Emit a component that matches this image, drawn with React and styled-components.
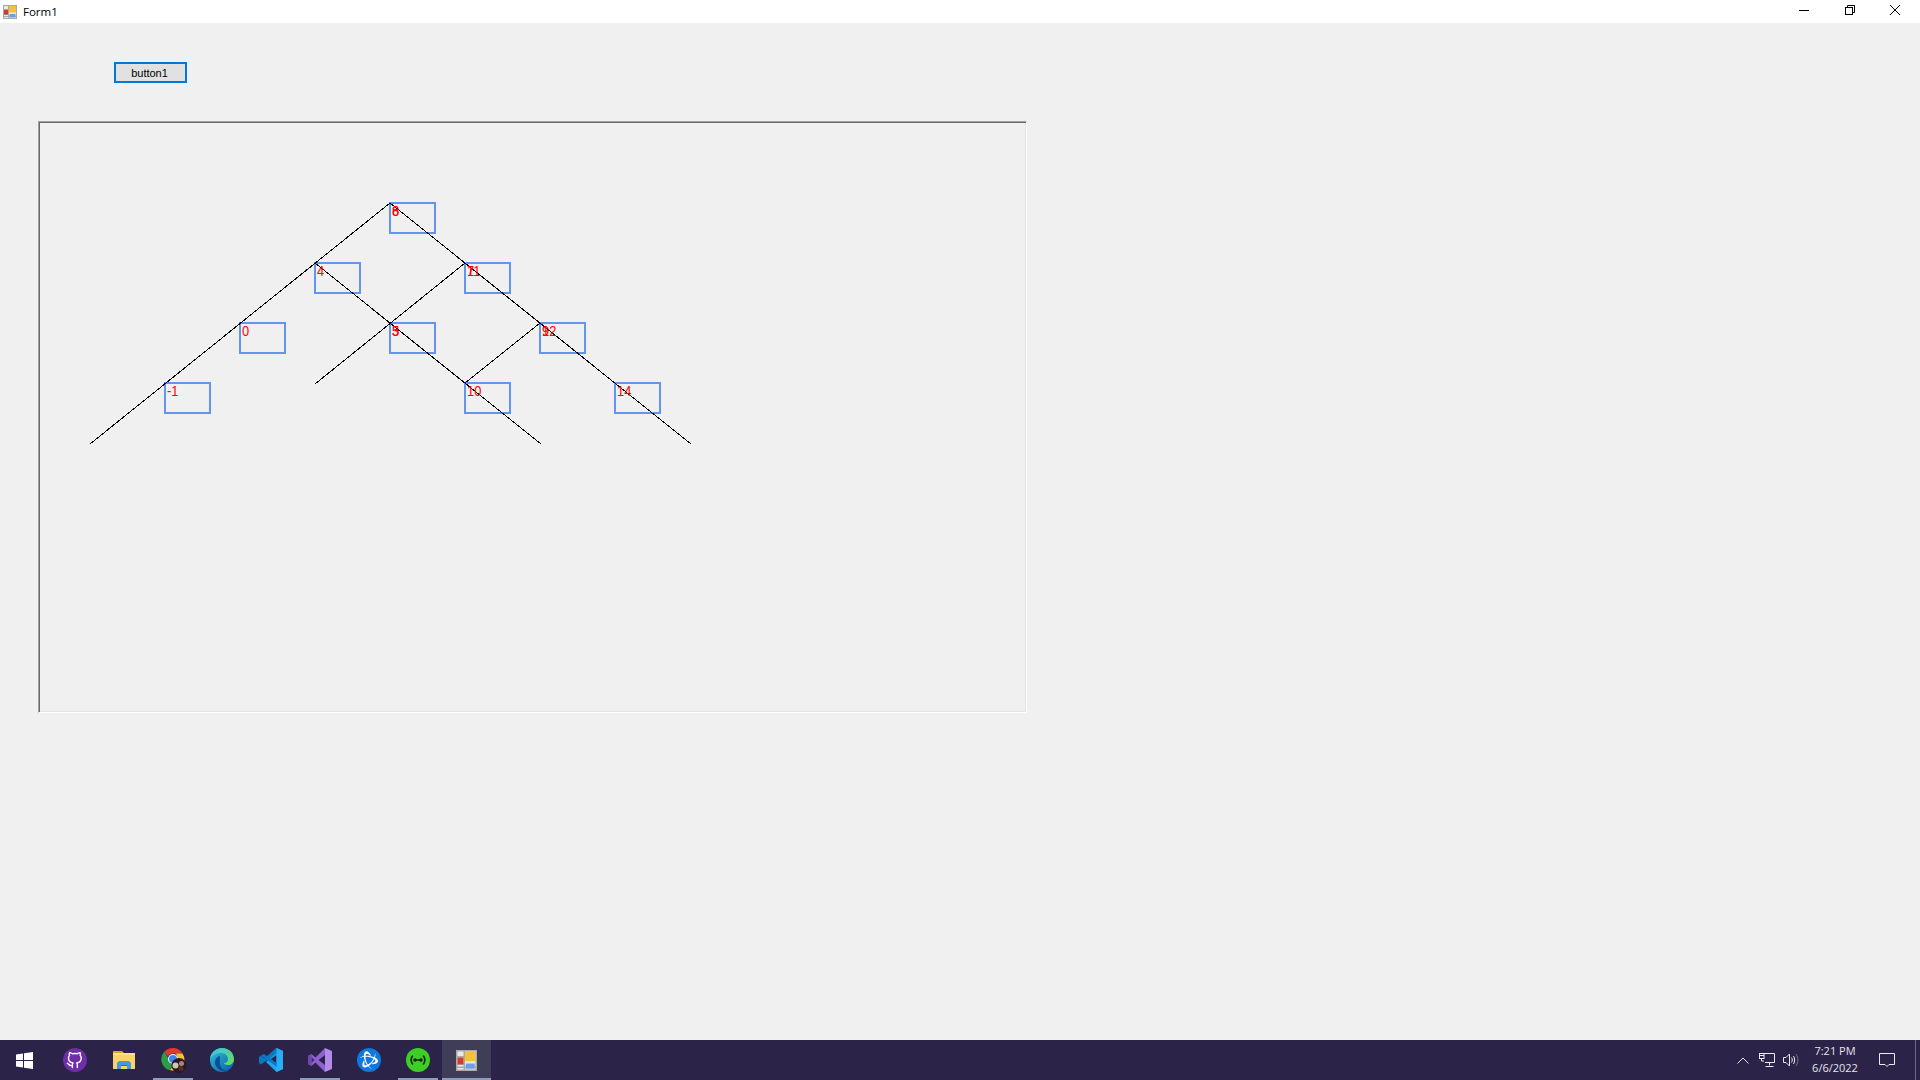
import React from "react";
import styled, { createGlobalStyle } from "styled-components";
import { FiGithub } from "react-icons/fi";
import { SiBattledotnet } from "react-icons/si";

const Global = createGlobalStyle`
  html, body { margin: 0; padding: 0; height: 100%; overflow: hidden; }
  #root { height: 100%; }
`;

const Screen = styled.div`
  width: 1920px; height: 1080px; display: flex; flex-direction: column;
  background: #f0f0f0;
`;
const TitleBar = styled.header`
  height: 23px; background: #fff; display: flex; align-items: center; flex: none;
`;
const AppTitle = styled.span`
  font: 11.5px "Open Sans", sans-serif; color: #000; margin-left: 6px;
`;
const TitleIcon = styled.span`
  display: flex; margin: 0 0 0 3px;
`;
const WindowControls = styled.div`
  margin-left: auto; margin-right: 2px; display: flex; height: 100%;
`;
const WindowButton = styled.span`
  width: 45.5px; height: 20px; display: flex; align-items: center; justify-content: center;
`;
const Client = styled.main`
  flex: 1; display: flex; flex-direction: column; align-items: flex-start;
  padding: 39px 0 0 38px;
`;
const PushButton = styled.button`
  box-sizing: border-box; width: 73px; height: 21px; margin-left: 76px; padding: 0 2px 0 0;
  border: 2px solid #0078d7; background: #e1e1e1; color: #000;
  font: 11px "Liberation Sans", Arial, sans-serif;
`;
const Canvas = styled.section`
  position: relative; box-sizing: border-box; width: 989px; height: 592px; margin-top: 38px;
  border-style: solid; border-width: 1px;
  border-color: #a0a0a0 #fff #fff #a0a0a0;
  box-shadow: inset 1px 1px 0 #696969, inset -1px -1px 0 #e3e3e3;
`;
const Wires = styled.svg`
  position: absolute; left: 0; top: 0; width: 987px; height: 590px; z-index: 2; pointer-events: none;
`;
const TreeNode = styled.div`
  position: absolute; box-sizing: border-box; width: 47px; height: 32px;
  left: ${(p) => p.$x - 39}px; top: ${(p) => p.$y - 122}px;
  border: 2px solid #6495ed;
`;
const NodeText = styled.span`
  position: absolute; left: 1px; top: -1px; z-index: 3;
  font: 14px/16px "Liberation Sans", Arial, sans-serif; color: #ff0000;
  white-space: nowrap; transform: scaleX(0.92); transform-origin: left center;
`;
const Taskbar = styled.footer`
  height: 40px; flex: none; background: #2c2349; display: flex; align-items: stretch;
`;
const StartButton = styled.span`
  width: 50px; padding-right: 2px; box-sizing: border-box; display: flex; align-items: center; justify-content: center;
`;
const TaskItem = styled.span`
  position: relative; width: 49px; display: flex; align-items: center; justify-content: center;
  background: ${(p) => (p.$active ? "#403d58" : "transparent")};
  &::after {
    content: ""; position: absolute; bottom: 0; height: 2px; background: #8f9db8;
    left: ${(p) => (p.$active ? "0" : "5px")}; right: ${(p) => (p.$active ? "0" : "4px")};
    display: ${(p) => (p.$running ? "block" : "none")};
  }
`;
const ChromeSlot = styled.span`
  display: flex; margin-left: 2px;
`;
const Round = styled.span`
  width: 24px; height: 24px; border-radius: 50%; display: flex; align-items: center; justify-content: center;
  background: ${(p) => p.$bg}; color: #fff;
`;
const Tray = styled.div`
  margin-left: auto; display: flex; align-items: stretch;
`;
const TrayIcon = styled.span`
  width: 24px; display: flex; align-items: center; justify-content: center;
`;
const Clock = styled.time`
  width: 48px; margin-left: 8px; padding-bottom: 2px; box-sizing: border-box;
  display: flex; flex-direction: column; align-items: center; justify-content: center;
  font: 11px/17px "Open Sans", sans-serif; color: #e6e4ec; white-space: nowrap;
`;
const Notify = styled.span`
  width: 56px; display: flex; align-items: center; justify-content: center;
`;
const ShowDesktop = styled.span`
  width: 5px; box-sizing: border-box; border-left: 1px solid #6d6985;
`;

const nodes = [
  { x: 389, y: 202, t: "8", g: "6" },
  { x: 314, y: 262, t: "4" },
  { x: 464, y: 262, t: "11", g: "7" },
  { x: 239, y: 322, t: "0" },
  { x: 389, y: 322, t: "5", g: "3" },
  { x: 539, y: 322, t: "12", g: "9" },
  { x: 164, y: 382, t: "-1" },
  { x: 464, y: 382, t: "10" },
  { x: 614, y: 382, t: "14" },
];
const segs = [
  [390, 203, 90, 444],
  [390, 203, 691, 444],
  [315, 263, 541, 444],
  [465, 263, 315, 384],
  [540, 323, 465, 383],
];

const FormIcon = ({ s = 14 }) => (
  <svg width={s} height={s} viewBox="0 0 14 14">
    <rect x="0.5" y="0.5" width="13" height="13" fill="#e8e8e8" stroke="#a9a9a9" />
    <path d="M0 4.5h6M0 9.5h6M5.5 0v14M0 11.5h14" stroke="#a9a9a9" fill="none" />
    <rect x="1" y="5" width="4" height="4.5" fill="#d33a2c" />
    <rect x="6" y="1" width="7" height="6.5" fill="#f5c13c" />
    <rect x="6.5" y="9" width="6" height="3.5" fill="#6c9fe8" />
  </svg>
);
const WinLogo = () => (
  <svg width="17" height="17" viewBox="0 0 17 17" fill="#fff">
    <path d="M0 2.4 7 1.4V8H0ZM8 1.3 17 0V8H8ZM0 9H7V15.6L0 14.6ZM8 9H17V17L8 15.7Z" />
  </svg>
);
const Explorer = () => (
  <svg width="22" height="20" viewBox="0 0 22 20">
    <path d="M0 1h9l2 2H0Z" fill="#e0a526" />
    <rect x="0" y="3" width="22" height="16" fill="#f8d366" />
    <rect x="0" y="3" width="22" height="2" fill="#fbe08c" />
    <path d="M4 19v-6l2-2h10l2 2v6h-4v-4H8v4Z" fill="#3f9be0" />
    <rect x="8" y="15" width="6" height="1" fill="#1f6fb5" />
  </svg>
);
const Chrome = () => (
  <svg width="26" height="26" viewBox="0 0 26 26">
    <path d="M12 1a11 11 0 0 1 9.5 5.5H12a5.5 5.5 0 0 0-5 3L3.5 4.5A11 11 0 0 1 12 1Z" fill="#e0392d" />
    <path d="M3.5 4.5 8 12.5a5 5 0 0 0 4 4.5l-3 6A11 11 0 0 1 3.5 4.5Z" fill="#2d9c48" />
    <path d="M21.5 6.5A11 11 0 0 1 9 23l5-6.5a5 5 0 0 0 2-4.5 5 5 0 0 0-1.500-5.500Z" fill="#f8c42e" />
    <circle cx="12" cy="12" r="5" fill="#fff" />
    <circle cx="12" cy="12" r="4" fill="#3f86ea" />
    <circle cx="18" cy="18.500" r="7.500" fill="#2b1a1e" />
    <circle cx="14.500" cy="18.500" r="3" fill="#cfc3bb" />
    <circle cx="20.500" cy="16.500" r="2.500" fill="#a7877a" />
    <circle cx="20" cy="21.500" r="2.500" fill="#5c2a2a" />
  </svg>
);
const Edge = () => (
  <svg width="24" height="24" viewBox="0 0 24 24">
    <defs>
      <linearGradient id="edgeA" x1="0" y1="0" x2="1" y2="1">
        <stop offset="0" stopColor="#2fc3dc" />
        <stop offset="1" stopColor="#0c59a4" />
      </linearGradient>
      <linearGradient id="edgeB" x1="0" y1="0" x2="1" y2="1">
        <stop offset="0" stopColor="#35c1f1" />
        <stop offset="1" stopColor="#6be04d" />
      </linearGradient>
    </defs>
    <circle cx="12" cy="12" r="12" fill="url(#edgeA)" />
    <path d="M12 0C19 0 24 5 24 11.500 24 15 21 17 18 17c-2 0-4-1-4-2 3 0 4-2 4-4 0-4-4-6-7-6C6 5 2 8 0 11 .5 5 5.500 0 12 0Z" fill="url(#edgeB)" />
    <path d="M10 8c-4 1-6 5-4.500 9 1.500 4 6 7 11 6-3-1-6-3-6.500-7-.3-3 0-6 0-8Z" fill="#0b4f95" />
  </svg>
);
const VSCode = () => (
  <svg width="24" height="24" viewBox="0 0 24 24">
    <path d="M17.500 0 24 3v18l-6.500 3L7 14l2.500-2.500L17.500 17V7L9.500 12.500 7 10Z" fill="#1ea4ef" />
    <path d="M17.500 0 24 3v18l-6.500 3Z" fill="#27aef5" />
    <path d="M2 7.500 0 9v6l2 1.500 5-4.500ZM2 7.500l15.500 11v-3.500L5 6ZM2 16.500 17.500 5.500V0L5 10.500" fill="#0a78c2" />
  </svg>
);
const VisualStudio = () => (
  <svg width="24" height="24" viewBox="0 0 24 24">
    <path d="M17 0 24 3v18l-7 3Z" fill="#b28be8" />
    <path d="M17 0v7L10.500 12 17 17v7L7.500 14.500 3.500 18 0 16V8l3.500-2L7.500 9.500Z" fill="#8d5fd0" />
    <path d="M3.500 9v6l3-3Z" fill="#3b2a63" />
    <path d="M0 8l3.500-2v3L3.500 15v3L0 16Z" fill="#6d47ad" />
  </svg>
);
const Broadcast = () => (
  <svg width="16" height="10" viewBox="0 0 16 10" fill="none" stroke="#10240d" strokeWidth="1.500" strokeLinecap="round">
    <path d="M2.500 1C.8 3.500.8 6.500 2.500 9M13.500 1c1.700 2.500 1.700 5.500 0 8M5 5h6" />
    <circle cx="5" cy="5" r="1" fill="#10240d" />
    <circle cx="11" cy="5" r="1" fill="#10240d" />
  </svg>
);
const Chevron = () => (
  <svg width="12" height="7" viewBox="0 0 12 7" fill="none" stroke="#e6e4ec"><path d="M.5 6.500 6 1l5.500 5.500" /></svg>
);
const Network = () => (
  <svg width="16" height="14" viewBox="0 0 16 14" fill="none" stroke="#ece9f2">
    <path d="M4.500 .5H15.500V9.500H6M10.500 9.500V12.500M6.500 13.500H14.500" />
    <rect x=".5" y=".5" width="4.500" height="5" />
    <path d="M.5 2.500h4.500M2.500 5.500V8H5" />
  </svg>
);
const Speaker = () => (
  <svg width="16" height="14" viewBox="0 0 16 14" fill="none" stroke="#ece9f2">
    <path d="M.5 4.500H3L6.500 1V13L3 9.500H.5Z" />
    <path d="M8.500 4.500c1 1.500 1 3.500 0 5M10.500 3c1.500 2.500 1.500 5.500 0 8" />
    <path d="M13 1c2.500 3.500 2.500 8.500 0 12" stroke="#77738a" />
  </svg>
);
const Bubble = () => (
  <svg width="16" height="15" viewBox="0 0 16 15" fill="none" stroke="#ece9f2">
    <path d="M.5 .5H15.500V11.500H10L8 13.500 6 11.500H.5Z" />
  </svg>
);

export default function App() {
  return (
    <Screen>
      <Global />
      <TitleBar>
        <TitleIcon><FormIcon /></TitleIcon>
        <AppTitle>Form1</AppTitle>
        <WindowControls>
          <WindowButton>
            <svg width="10" height="1" viewBox="0 0 10 1"><rect width="10" height="1" fill="#000" /></svg>
          </WindowButton>
          <WindowButton>
            <svg width="10" height="10" viewBox="0 0 10 10" fill="none" stroke="#000">
              <rect x=".5" y="2.500" width="7" height="7" />
              <path d="M2.500 2.500V.5H9.500V7.500H7.500" />
            </svg>
          </WindowButton>
          <WindowButton>
            <svg width="10" height="10" viewBox="0 0 10 10" fill="none" stroke="#000"><path d="M0 0 10 10M10 0 0 10" /></svg>
          </WindowButton>
        </WindowControls>
      </TitleBar>
      <Client>
        <PushButton>button1</PushButton>
        <Canvas>
          {nodes.map((n) => (
            <TreeNode key={n.t} $x={n.x} $y={n.y}>
              {n.g && <NodeText>{n.g}</NodeText>}
              <NodeText>{n.t}</NodeText>
            </TreeNode>
          ))}
          <Wires viewBox="39 122 987 590" shapeRendering="crispEdges">
            {segs.map(([a, b, c, d]) => (
              <line key={`${a}-${b}-${c}`} x1={a} y1={b} x2={c} y2={d} stroke="#000" strokeWidth="1" />
            ))}
          </Wires>
        </Canvas>
      </Client>
      <Taskbar>
        <StartButton><WinLogo /></StartButton>
        <TaskItem><Round $bg="#6f2da8"><FiGithub size={17} /></Round></TaskItem>
        <TaskItem><Explorer /></TaskItem>
        <TaskItem $running><ChromeSlot><Chrome /></ChromeSlot></TaskItem>
        <TaskItem><Edge /></TaskItem>
        <TaskItem><VSCode /></TaskItem>
        <TaskItem $running><VisualStudio /></TaskItem>
        <TaskItem><Round $bg="#0d78e0"><SiBattledotnet size={18} /></Round></TaskItem>
        <TaskItem $running><Round $bg="#3ecf24"><Broadcast /></Round></TaskItem>
        <TaskItem $running $active><FormIcon s={21} /></TaskItem>
        <Tray>
          <TrayIcon><Chevron /></TrayIcon>
          <TrayIcon><Network /></TrayIcon>
          <TrayIcon><Speaker /></TrayIcon>
          <Clock>
            <span>7:21 PM</span>
            <span>6/6/2022</span>
          </Clock>
          <Notify><Bubble /></Notify>
          <ShowDesktop />
        </Tray>
      </Taskbar>
    </Screen>
  );
}
